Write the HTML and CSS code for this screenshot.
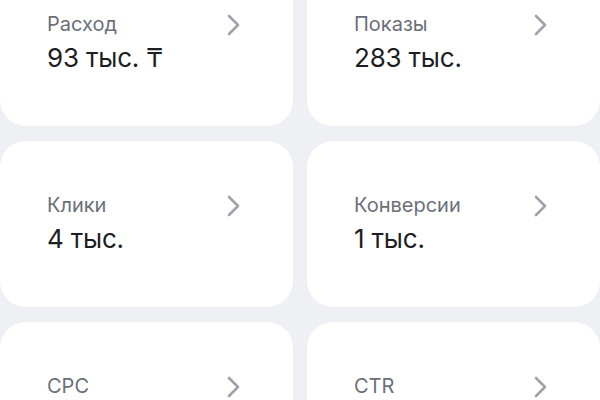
FILE: index.html
```html
<!DOCTYPE html>
<html lang="ru">
<head>
<meta charset="utf-8">
<link rel="stylesheet" href="styles.css">
</head>
<body>
<div class="grid">
  <div class="card">
    <div class="info">
      <div class="label">Расход</div>
      <div class="value">93 тыс. ₸</div>
    </div>
    <svg class="chev" viewBox="0 0 14 22" width="14" height="22"><path d="M2 2 L11 11 L2 20" fill="none" stroke="#9ea2ab" stroke-width="2.6" stroke-linecap="round" stroke-linejoin="round"/></svg>
  </div>
  <div class="card">
    <div class="info">
      <div class="label">Показы</div>
      <div class="value">283 тыс.</div>
    </div>
    <svg class="chev" viewBox="0 0 14 22" width="14" height="22"><path d="M2 2 L11 11 L2 20" fill="none" stroke="#9ea2ab" stroke-width="2.6" stroke-linecap="round" stroke-linejoin="round"/></svg>
  </div>
  <div class="card">
    <div class="info">
      <div class="label">Клики</div>
      <div class="value">4 тыс.</div>
    </div>
    <svg class="chev" viewBox="0 0 14 22" width="14" height="22"><path d="M2 2 L11 11 L2 20" fill="none" stroke="#9ea2ab" stroke-width="2.6" stroke-linecap="round" stroke-linejoin="round"/></svg>
  </div>
  <div class="card">
    <div class="info">
      <div class="label">Конверсии</div>
      <div class="value">1 тыс.</div>
    </div>
    <svg class="chev" viewBox="0 0 14 22" width="14" height="22"><path d="M2 2 L11 11 L2 20" fill="none" stroke="#9ea2ab" stroke-width="2.6" stroke-linecap="round" stroke-linejoin="round"/></svg>
  </div>
  <div class="card">
    <div class="info">
      <div class="label">CPC</div>
    </div>
    <svg class="chev" viewBox="0 0 14 22" width="14" height="22"><path d="M2 2 L11 11 L2 20" fill="none" stroke="#9ea2ab" stroke-width="2.6" stroke-linecap="round" stroke-linejoin="round"/></svg>
  </div>
  <div class="card">
    <div class="info">
      <div class="label">CTR</div>
    </div>
    <svg class="chev" viewBox="0 0 14 22" width="14" height="22"><path d="M2 2 L11 11 L2 20" fill="none" stroke="#9ea2ab" stroke-width="2.6" stroke-linecap="round" stroke-linejoin="round"/></svg>
  </div>
</div>
</body>
</html>
```
FILE: styles.css
```css
html, body {
  margin: 0;
  padding: 0;
  background: #eef0f4;
  overflow: hidden;
}
body {
  font-family: Inter, "Noto Sans", sans-serif;
}
.grid {
  display: grid;
  grid-template-columns: 293px 293px;
  grid-auto-rows: 166px;
  column-gap: 14px;
  row-gap: 15px;
  margin-top: -40px;
  width: 600px;
}
.card {
  background: #ffffff;
  border-radius: 26px;
  display: flex;
  align-items: flex-start;
  justify-content: space-between;
  padding: 52px 52px 0 47px;
}
.info {
  display: flex;
  flex-direction: column;
  gap: 7px;
}
.label {
  font-size: 20px;
  line-height: 24px;
  color: #6b6f7a;
}
.value {
  font-size: 26px;
  line-height: 30px;
  color: #1d1e22;
  letter-spacing: -0.2px;
}
.chev {
  margin-top: 2px;
}
```
